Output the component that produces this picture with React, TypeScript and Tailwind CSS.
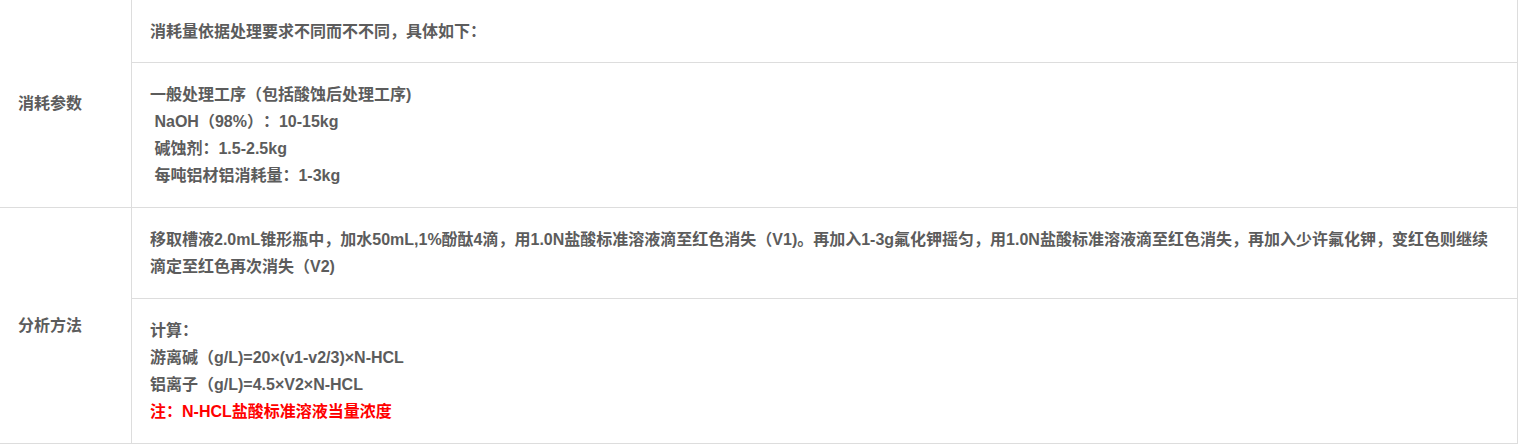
const font = { fontFamily: '"Liberation Sans", "Noto Sans CJK SC", sans-serif' };

const groups = [
  {
    label: "消耗参数",
    rows: [
      { h: "h-[63px]", lines: ["消耗量依据处理要求不同而不不同，具体如下："] },
      {
        h: "h-[144px]",
        lines: [
          "一般处理工序（包括酸蚀后处理工序)",
          " NaOH（98%）：10-15kg",
          " 碱蚀剂：1.5-2.5kg",
          " 每吨铝材铝消耗量：1-3kg",
        ],
      },
    ],
  },
  {
    label: "分析方法",
    rows: [
      {
        h: "h-[91px]",
        lines: [
          "移取槽液2.0mL锥形瓶中，加水50mL,1%酚酞4滴，用1.0N盐酸标准溶液滴至红色消失（V1)。再加入1-3g氟化钾摇匀，用1.0N盐酸标准溶液滴至红色消失，再加入少许氟化钾，变红色则继续",
          "滴定至红色再次消失（V2)",
        ],
      },
      {
        h: "h-[144px]",
        lines: [
          "计算：",
          "游离碱（g/L)=20×(v1-v2/3)×N-HCL",
          "铝离子（g/L)=4.5×V2×N-HCL",
        ],
        note: "注：N-HCL盐酸标准溶液当量浓度",
      },
    ],
  },
];

export default function App() {
  return (
    <div
      className="w-[1518px] h-[444px] bg-white text-[16px] font-bold text-[#5c5c5c] [text-spacing-trim:space-all]"
      style={font}
    >
      {groups.map((g) => (
        <div key={g.label} className="flex border-b border-[#dddddd]">
          <div className="w-[132px] shrink-0 flex items-center pl-[18px] border-r border-[#dddddd]">
            {g.label}
          </div>
          <div className="w-[1386px] border-r border-[#dddddd] flex flex-col">
            {g.rows.map((r, i) => (
              <div
                key={i}
                className={`${r.h} flex flex-col justify-center pl-[18px] leading-[27px] ${
                  i < g.rows.length - 1 ? "border-b border-[#dddddd]" : ""
                }`}
              >
                {r.lines.map((l) => (
                  <div key={l} className="whitespace-pre">
                    {l}
                  </div>
                ))}
                {r.note && <div className="text-[#ff0000]">{r.note}</div>}
              </div>
            ))}
          </div>
        </div>
      ))}
    </div>
  );
}
